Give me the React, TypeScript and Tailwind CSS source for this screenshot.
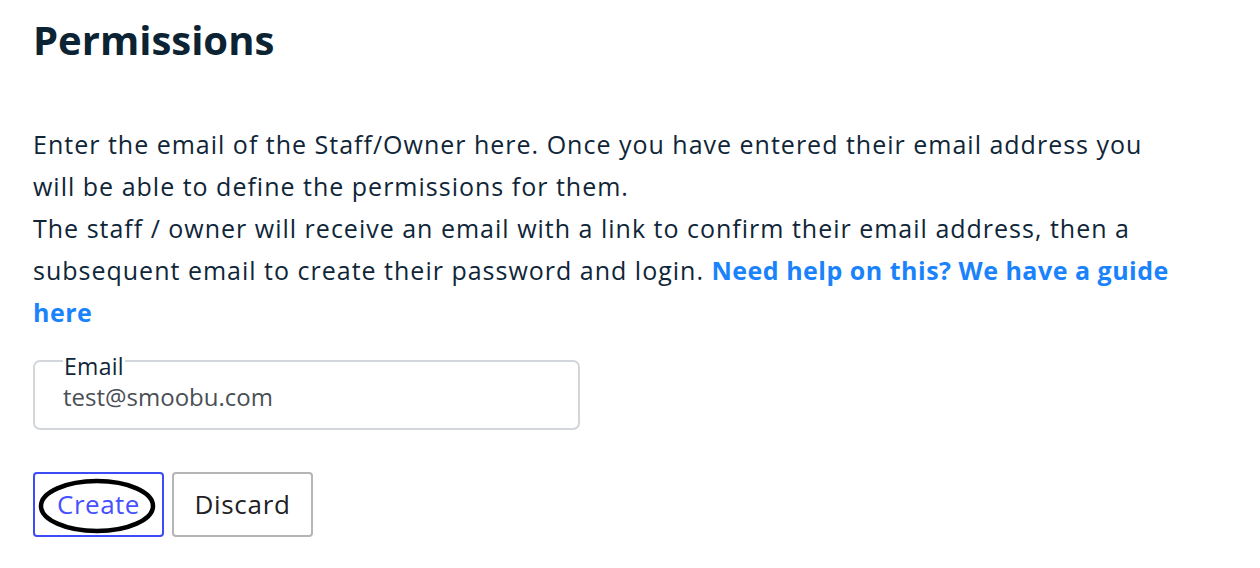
import React from 'react'

function App() {
  return (
    <div className="bg-white min-h-[568px] px-[33px] pt-[12px] text-[#0f2638]" style={{ fontFamily: '"Open Sans", "Liberation Sans", sans-serif' }}>
      <h1 className="text-[40px] font-bold leading-[56px] text-[#0c2333]">Permissions</h1>

      <div className="mt-[55px] text-[25px] tracking-[1px] leading-[42px]">
        <p>
          Enter the email of the Staff/Owner here. Once you have entered their email address you
          <br />
          will be able to define the permissions for them.
        </p>
        <p>
          The staff / owner will receive an email with a link to confirm their email address, then a
          <br />
          subsequent email to create their password and login.{' '}
          <a href="#" className="font-bold tracking-[0.5px] text-[#1a82fb]">
            Need help on this? We have a guide
            <br />
            here
          </a>
        </p>
      </div>

      <fieldset className="mt-[13px] w-[547px] h-[84px] border-2 border-[#d3d6db] rounded-[7px] px-[28px]">
        <legend className="px-[1px] pt-[10px] text-[23px] tracking-[0.3px] leading-[20px] text-[#0f2638]">Email</legend>
        <input
          className="w-full h-[30px] leading-[30px] outline-none text-[24px] text-[#4a4f55] bg-transparent mt-[6px]"
          defaultValue="test@smoobu.com"
        />
      </fieldset>

      <div className="mt-[42px] flex gap-[8px]">
        <button className="relative w-[131px] h-[65px] border-2 border-[#3e4cf7] rounded-[4px] text-[26px] tracking-[0.5px] text-[#4650ff] bg-white">
          Create
          <svg className="absolute left-[3px] top-[4px]" width="118" height="56" viewBox="0 0 118 56">
            <ellipse cx="59" cy="28" rx="56" ry="25" fill="none" stroke="#000" strokeWidth="4.5" />
          </svg>
        </button>
        <button className="w-[141px] h-[65px] border-2 border-[#b5b5b5] rounded-[4px] text-[26px] tracking-[0.7px] text-[#202124] bg-white">
          Discard
        </button>
      </div>
    </div>
  )
}

export default App
